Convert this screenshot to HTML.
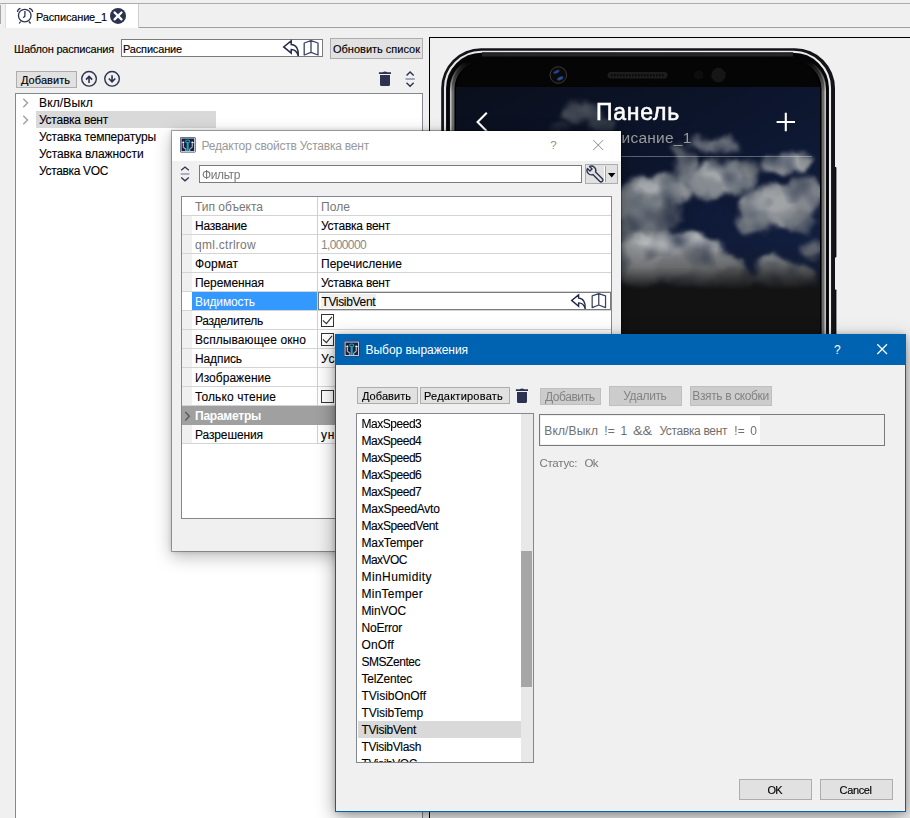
<!DOCTYPE html>
<html><head><meta charset="utf-8"><title>ui</title>
<style>
html,body{margin:0;padding:0;}
body{width:910px;height:818px;overflow:hidden;background:#f0f0f0;position:relative;font-family:"Liberation Sans",sans-serif;}
.t{position:absolute;white-space:pre;display:block;}
.r{position:absolute;}
svg{position:absolute;overflow:visible;}
</style></head><body>
<div class="r" style="left:0px;top:3px;width:910px;height:1px;background:#adadad;"></div>
<div class="r" style="left:138px;top:27px;width:772px;height:1px;background:#a0a0a0;"></div>
<div class="r" style="left:0px;top:5px;width:1px;height:18.5px;background:#a6a6a6;"></div>
<div class="r" style="left:5px;top:4px;width:1px;height:24px;background:#dcdcdc;"></div>
<div class="r" style="left:6px;top:4px;width:132px;height:24px;background:#fff;"></div>
<div class="r" style="left:138px;top:4px;width:1px;height:24px;background:#d0d0d0;"></div>
<svg style="left:16px;top:7px" width="18" height="18" viewBox="0 0 18 18"><circle cx="8.75" cy="8.6" r="6.3" fill="none" stroke="#2d3250" stroke-width="1.3"/><path d="M8.9 3.9V9.3L7.2 10.8" fill="none" stroke="#2d3250" stroke-width="1.3"/><path d="M1.5 5 Q1.6 2 4.5 1.3 M16.6 5 Q16.5 2 13 1.3 M4.6 14.5 L3.2 16.5 M13 14.5 L14.5 16.5" stroke="#2d3250" stroke-width="1.3" fill="none"/></svg>
<span class="t" style="left:36px;top:8.5px;font-size:11px;line-height:16px;color:#000;letter-spacing:-0.157px;-webkit-text-stroke:0.13px #000;">Расписание_1</span>
<svg style="left:110px;top:8px" width="16" height="16" viewBox="0 0 16 16"><circle cx="8" cy="7.9" r="8" fill="#2d3250"/><path d="M4.6 4.5L11.5 11.4M11.5 4.5L4.6 11.4" stroke="#fff" stroke-width="2.3" stroke-linecap="round"/></svg>
<span class="t" style="left:14px;top:40.5px;font-size:11px;line-height:16px;color:#000;letter-spacing:-0.202px;-webkit-text-stroke:0.13px #000;">Шаблон расписания</span>
<div class="r" style="left:121px;top:39px;width:202px;height:18px;background:#fff;border:1px solid #7a7a7a;box-sizing:border-box;"></div>
<span class="t" style="left:123px;top:40.5px;font-size:11px;line-height:16px;color:#000;letter-spacing:-0.165px;-webkit-text-stroke:0.13px #000;">Расписание</span>
<svg style="left:283px;top:40px" width="17.0" height="17.0" viewBox="0 0 17 17"><path d="M8.2 0.9 L0.7 6.9 L8.2 13.1 V9.6 C11.6 9.6 14 11.4 15.3 16 C15.9 9 13 4.4 8.2 4.4 Z" fill="none" stroke="#232b48" stroke-width="1.5" stroke-linejoin="miter"/></svg>
<svg style="left:303px;top:40px" width="17.0" height="17.0" viewBox="0 0 17 17"><path d="M1.2 3 L8 0.6 L15 3 V15 L8 12.4 L1.2 15 Z M8 0.6 V12.4" fill="none" stroke="#3b4362" stroke-width="1.3" stroke-linejoin="round"/></svg>
<div class="r" style="left:330px;top:38px;width:93px;height:21px;background:#e1e1e1;border:1px solid #adadad;box-sizing:border-box;"></div>
<span class="t" style="left:333px;top:40.5px;font-size:11px;line-height:16px;color:#000;letter-spacing:-0.001px;-webkit-text-stroke:0.13px #000;">Обновить список</span>
<div class="r" style="left:16px;top:71px;width:61px;height:17px;background:#e1e1e1;border:1px solid #adadad;box-sizing:border-box;"></div>
<span class="t" style="left:21px;top:71.5px;font-size:11px;line-height:16px;color:#000;letter-spacing:0.048px;-webkit-text-stroke:0.13px #000;">Добавить</span>
<svg style="left:81px;top:71px" width="17" height="17" viewBox="0 0 17 17"><circle cx="8.05" cy="7.85" r="7.3" fill="none" stroke="#2d3250" stroke-width="1.4"/><path d="M8.05 12V5.4M5 8.6L8.05 5.4L11.2 8.6" fill="none" stroke="#2d3250" stroke-width="1.6"/></svg>
<svg style="left:104px;top:71px" width="17" height="17" viewBox="0 0 17 17"><circle cx="8.05" cy="7.85" r="7.3" fill="none" stroke="#2d3250" stroke-width="1.4"/><path d="M8.05 4.2V10.6M4.8 7.5L8.05 10.8L11.3 7.5" fill="none" stroke="#2d3250" stroke-width="1.6"/></svg>
<svg style="left:378px;top:71px" width="14" height="16" viewBox="0 0 14 16"><path d="M0.9 1.2H13V2.9H0.9Z M4.6 1.3Q7 -0.2 9.4 1.3Z M2 4H12V13.4Q12 14.9 10.5 14.9H3.5Q2 14.9 2 13.4Z" fill="#2d3250"/></svg>
<svg style="left:405px;top:71px" width="10" height="16" viewBox="0 0 10 16"><path d="M1.5 4.6L5.1 1.1L8.7 4.6M1.5 11.8L5.1 15.2L8.7 11.8" fill="none" stroke="#2d3250" stroke-width="1.4"/><path d="M0.5 8H9.8" stroke="#a3a7ba" stroke-width="2"/></svg>
<div class="r" style="left:15px;top:93px;width:408px;height:740px;background:#fff;border:1px solid #828790;box-sizing:border-box;"></div>
<div class="r" style="left:36px;top:111px;width:180px;height:17px;background:#d9d9d9;"></div>
<span class="t" style="left:39px;top:94.75px;font-size:12px;line-height:16px;color:#000;letter-spacing:0.157px;-webkit-text-stroke:0.1px #000;">Вкл/Выкл</span>
<span class="t" style="left:39px;top:111.75px;font-size:12px;line-height:16px;color:#000;letter-spacing:-0.232px;-webkit-text-stroke:0.1px #000;">Уставка вент</span>
<span class="t" style="left:39px;top:128.75px;font-size:12px;line-height:16px;color:#000;letter-spacing:-0.163px;-webkit-text-stroke:0.1px #000;">Уставка температуры</span>
<span class="t" style="left:39px;top:145.75px;font-size:12px;line-height:16px;color:#000;letter-spacing:-0.091px;-webkit-text-stroke:0.1px #000;">Уставка влажности</span>
<span class="t" style="left:39px;top:162.75px;font-size:12px;line-height:16px;color:#000;letter-spacing:-0.341px;-webkit-text-stroke:0.1px #000;">Уставка VOC</span>
<svg style="left:22px;top:97.5px" width="8" height="10" viewBox="0 0 8 10"><path d="M1.3 0.8L5.5 5L1.3 9.2" fill="none" stroke="#a3a3a3" stroke-width="1.5"/></svg>
<svg style="left:22px;top:114.5px" width="8" height="10" viewBox="0 0 8 10"><path d="M1.3 0.8L5.5 5L1.3 9.2" fill="none" stroke="#a3a3a3" stroke-width="1.5"/></svg>
<div class="r" style="left:429px;top:37px;width:500px;height:800px;background:#f0f0f0;border:1px solid #000;box-sizing:border-box;"></div>
<svg style="left:0;top:0;overflow:hidden" width="910" height="806" viewBox="0 0 910 806"><defs><filter id="b1" x="-20%" y="-20%" width="140%" height="140%"><feGaussianBlur stdDeviation="0.6"/></filter><filter id="b2" x="-20%" y="-20%" width="140%" height="140%"><feGaussianBlur stdDeviation="1.4"/></filter><filter id="cl" x="-10%" y="-10%" width="120%" height="120%" color-interpolation-filters="sRGB"><feGaussianBlur in="SourceGraphic" stdDeviation="2.2" result="m"/><feTurbulence type="fractalNoise" baseFrequency="0.05" numOctaves="3" seed="4" result="n"/><feDisplacementMap in="m" in2="n" scale="13" xChannelSelector="R" yChannelSelector="G" result="md"/><feGaussianBlur in="md" stdDeviation="0.9" result="md2"/><feTurbulence type="fractalNoise" baseFrequency="0.035" numOctaves="2" seed="9" result="n2"/><feColorMatrix in="n2" type="matrix" values="0 0 0 0 1  0 0 0 0 1  0 0 0 0 1  1.5 0 0 0 0.15" result="na"/><feComposite in="md2" in2="na" operator="in"/></filter><filter id="cl2" x="-30%" y="-30%" width="160%" height="160%"><feGaussianBlur stdDeviation="5"/></filter><linearGradient id="sky" x1="0" y1="0" x2="1" y2="1"><stop offset="0" stop-color="#0a0f1c"/><stop offset="0.45" stop-color="#0c152c"/><stop offset="1" stop-color="#132144"/></linearGradient><linearGradient id="fade" x1="0" y1="0" x2="0" y2="1"><stop offset="0" stop-color="#131313" stop-opacity="0"/><stop offset="0.5" stop-color="#131313" stop-opacity="0.28"/><stop offset="0.8" stop-color="#131313" stop-opacity="0.72"/><stop offset="1" stop-color="#131313" stop-opacity="1"/></linearGradient><linearGradient id="hl" x1="0" y1="0" x2="1" y2="0"><stop offset="0" stop-color="#e6e6e6"/><stop offset="0.5" stop-color="#f4f4f4"/><stop offset="1" stop-color="#ececec"/></linearGradient><linearGradient id="lgL" x1="0" y1="0" x2="1" y2="0"><stop offset="0" stop-color="#0a0a0a"/><stop offset="0.12" stop-color="#6a6a6a"/><stop offset="0.24" stop-color="#b8b8b8"/><stop offset="0.55" stop-color="#747474"/><stop offset="0.9" stop-color="#151515"/><stop offset="1" stop-color="#000"/></linearGradient><linearGradient id="lgR" x1="0" y1="0" x2="1" y2="0"><stop offset="0" stop-color="#000"/><stop offset="0.12" stop-color="#151515"/><stop offset="0.5" stop-color="#7a7a7a"/><stop offset="0.76" stop-color="#c2c2c2"/><stop offset="0.9" stop-color="#5a5a5a"/><stop offset="1" stop-color="#0a0a0a"/></linearGradient><linearGradient id="vg" x1="0" y1="0" x2="0" y2="1"><stop offset="0" stop-color="#000"/><stop offset="1" stop-color="#fff"/></linearGradient><mask id="vm" maskUnits="userSpaceOnUse" x="440" y="40" width="400" height="800"><rect x="440" y="40" width="400" height="22" fill="#000"/><rect x="440" y="62" width="400" height="30" fill="url(#vg)"/><rect x="440" y="92" width="400" height="760" fill="#fff"/></mask><radialGradient id="hole"><stop offset="0" stop-color="#0f1b3a" stop-opacity="0.95"/><stop offset="0.55" stop-color="#0f1b3a" stop-opacity="0.8"/><stop offset="1" stop-color="#0f1b3a" stop-opacity="0"/></radialGradient><linearGradient id="tg" x1="0" y1="0" x2="0" y2="1"><stop offset="0" stop-color="#1b1b1b"/><stop offset="0.55" stop-color="#2a2a2a"/><stop offset="1" stop-color="#050506"/></linearGradient><clipPath id="scr"><rect x="456" y="87" width="364" height="740"/></clipPath><clipPath id="ph"><rect x="441" y="48" width="395" height="790" rx="40"/></clipPath></defs><rect x="834" y="167" width="2.4" height="90.5" rx="0.8" fill="#0b0b0d"/><rect x="834" y="289.5" width="2.4" height="60" rx="0.8" fill="#0b0b0d"/><rect x="441.2" y="48.2" width="393.8" height="800" rx="40" fill="#121418"/><g clip-path="url(#ph)"><rect x="445" y="51.7" width="385" height="800" rx="36.5" fill="none" stroke="url(#hl)" stroke-width="2.1" filter="url(#b1)"/><rect x="446.7" y="53.3" width="381.7" height="800" rx="35" fill="#050506"/><rect x="482" y="52.25" width="311" height="5.2" fill="url(#tg)"/><g mask="url(#vm)"><rect x="452.4" y="59" width="371.2" height="800" rx="30" fill="none" stroke="#6c6c6c" stroke-width="5" filter="url(#b1)"/><rect x="450.8" y="57.4" width="374.4" height="800" rx="31.5" fill="none" stroke="#c4c4c4" stroke-width="1.5" filter="url(#b1)"/><rect x="455.6" y="62" width="364.8" height="800" rx="27" fill="none" stroke="#050505" stroke-width="2.2" filter="url(#b1)"/></g></g><circle cx="558.3" cy="75" r="8.3" fill="#0a0a0a" stroke="#3a3a3a" stroke-width="1"/><ellipse cx="556.3" cy="71.8" rx="3.2" ry="1.4" fill="#2a4796" transform="rotate(-25 556.5 71.5)" filter="url(#b1)"/><ellipse cx="560.2" cy="78.2" rx="3.2" ry="1.5" fill="#2f4fa6" transform="rotate(-25 560.3 78.3)" filter="url(#b1)"/><rect x="607.5" y="72" width="60" height="6.4" rx="3.2" fill="#1d1d1d"/><path d="M611 75.2H665" stroke="#0a0a0a" stroke-width="2.4" stroke-dasharray="1.6 1.4"/><circle cx="698.7" cy="75" r="4.6" fill="#111" filter="url(#b1)"/><circle cx="718.5" cy="75" r="7.4" fill="#121212" filter="url(#b1)"/><g clip-path="url(#scr)"><rect x="456" y="87" width="364" height="740" fill="#131313"/><rect x="456" y="87" width="364" height="204" fill="url(#sky)"/><g filter="url(#cl)"><ellipse cx="580" cy="112" rx="20" ry="10" fill="#59606a" opacity="0.75"/><ellipse cx="600" cy="124" rx="14" ry="8" fill="#4c535d" opacity="0.6"/><ellipse cx="562" cy="127" rx="10" ry="5" fill="#3a414b" opacity="0.5"/><ellipse cx="655" cy="192" rx="34" ry="17" fill="#8a8f94" opacity="1"/><ellipse cx="636" cy="200" rx="22" ry="20" fill="#7b8086" opacity="1"/><ellipse cx="645" cy="224" rx="26" ry="13" fill="#686e75" opacity="0.95"/><ellipse cx="625" cy="232" rx="10" ry="10" fill="#5c626a" opacity="0.9"/><ellipse cx="640" cy="214" rx="22" ry="14" fill="#6f757c" opacity="0.95"/><ellipse cx="668" cy="214" rx="14" ry="12" fill="#676d75" opacity="0.85"/><ellipse cx="686" cy="167" rx="11" ry="17" fill="#7a7f86" opacity="0.9"/><ellipse cx="682" cy="150" rx="8" ry="6" fill="#6a7078" opacity="0.8"/><ellipse cx="717" cy="146" rx="22" ry="7" fill="#80858c" opacity="0.9"/><ellipse cx="700" cy="143" rx="10" ry="5" fill="#6c727a" opacity="0.8"/><ellipse cx="724" cy="178" rx="32" ry="18" fill="#8f9498" opacity="1"/><ellipse cx="706" cy="186" rx="18" ry="13" fill="#858a8f" opacity="0.95"/><ellipse cx="748" cy="170" rx="12" ry="10" fill="#6f757c" opacity="0.8"/><ellipse cx="785" cy="164" rx="24" ry="9" fill="#9da0a3" opacity="1"/><ellipse cx="803" cy="160" rx="8" ry="5" fill="#8a8e93" opacity="0.8"/><ellipse cx="776" cy="206" rx="38" ry="20" fill="#8e9297" opacity="1"/><ellipse cx="805" cy="196" rx="16" ry="20" fill="#83878d" opacity="0.95"/><ellipse cx="752" cy="222" rx="18" ry="12" fill="#7a7f85" opacity="0.9"/><ellipse cx="800" cy="222" rx="18" ry="10" fill="#6e737a" opacity="0.8"/><ellipse cx="812" cy="249" rx="10" ry="10" fill="#72777e" opacity="0.85"/><ellipse cx="672" cy="248" rx="50" ry="17" fill="#a6a9ab" opacity="1"/><ellipse cx="640" cy="262" rx="34" ry="24" fill="#979a9d" opacity="1"/><ellipse cx="700" cy="270" rx="46" ry="20" fill="#8a8d90" opacity="1"/><ellipse cx="736" cy="280" rx="20" ry="14" fill="#6f7276" opacity="1"/><ellipse cx="772" cy="264" rx="16" ry="10" fill="#888c90" opacity="1"/><ellipse cx="786" cy="278" rx="30" ry="14" fill="#74787c" opacity="1"/><ellipse cx="650" cy="188" rx="20" ry="8" fill="#a9adb0" opacity="0.9"/><ellipse cx="722" cy="174" rx="20" ry="8" fill="#a5a9ac" opacity="0.9"/><ellipse cx="772" cy="202" rx="22" ry="9" fill="#a2a6a9" opacity="0.9"/><ellipse cx="672" cy="242" rx="34" ry="8" fill="#b5b8b9" opacity="0.95"/><ellipse cx="786" cy="162" rx="14" ry="4" fill="#aaadaf" opacity="0.9"/><ellipse cx="770" cy="260" rx="9" ry="5" fill="#9b9ea1" opacity="0.9"/></g><ellipse cx="714" cy="216" rx="30" ry="17" fill="url(#hole)"/><rect x="456" y="244" width="364" height="46" fill="url(#fade)"/><rect x="456" y="290" width="364" height="540" fill="#131313"/></g><rect x="465" y="156" width="347" height="1" fill="#ffffff" opacity="0.32"/><path d="M486.8 112.7L477.6 122L486.8 131.3" fill="none" stroke="#fff" stroke-width="2.1"/><path d="M785.8 112.8V131.2M776.6 122H795" stroke="#fff" stroke-width="2.1"/></svg>
<span class="t" style="left:596px;top:97.0px;font-size:23px;line-height:30px;color:#fff;letter-spacing:0.757px;-webkit-text-stroke:0.55px #fff;">Панель</span>
<span class="t" style="left:586px;top:128.0px;font-size:15.5px;line-height:20px;color:#9b9b9b;letter-spacing:0.234px;">Расписание_1</span>
<div class="r" style="left:171px;top:130px;width:451px;height:422px;background:#f0f0f0;background-clip:padding-box;box-sizing:border-box;border:1px solid rgba(0,0,0,0.31);box-shadow:0 5px 16px rgba(0,0,0,0.26), 0 0 5px rgba(0,0,0,0.14);"></div>
<div class="r" style="left:172px;top:131px;width:449px;height:30px;background:#fff;"></div>
<svg style="left:180.1px;top:137.0px" width="15.6" height="15.6" viewBox="0 0 15.4 15.4"><rect x="0" y="0" width="15.4" height="15.4" rx="1.3" fill="#2a3050"/><rect x="1.05" y="1.05" width="13.3" height="13.3" fill="#1a2040" stroke="#c6cad6" stroke-width="1"/><path d="M3.3 6.6V9.5Q3.3 11.1 5 11.2Q5.8 11.3 5.8 12.2V13.8M12.1 6.6V9.5Q12.1 11.1 10.4 11.2Q9.6 11.3 9.6 12.2V13.8" fill="none" stroke="#f2f4f7" stroke-width="0.85"/><path d="M1.6 5.6H2.6M12.8 5.6H13.8" stroke="#e4e7ec" stroke-width="0.8"/><circle cx="3.3" cy="5.4" r="0.95" fill="#f2f4f7"/><circle cx="12.1" cy="5.4" r="0.95" fill="#f2f4f7"/><path d="M7.6 5V13.9" stroke="#1fa7bd" stroke-width="2"/><ellipse cx="7.6" cy="4.2" rx="2.05" ry="1.35" fill="#1a2040" stroke="#1fa7bd" stroke-width="1"/></svg>
<span class="t" style="left:201.5px;top:137.5px;font-size:12px;line-height:16px;color:#999;letter-spacing:-0.210px;">Редактор свойств Уставка вент</span>
<span class="t" style="left:550.3px;top:137.3px;font-size:11.5px;line-height:16px;color:#8c8c8c;">?</span>
<svg style="left:593px;top:140px" width="11" height="11" viewBox="0 0 11 11"><path d="M0.3 0.1L10.2 10M10.2 0.1L0.3 10" stroke="#8c8c8c" stroke-width="1"/></svg>
<svg style="left:180px;top:166px" width="10" height="16" viewBox="0 0 10 16"><path d="M1.2 4.3L5 1L8.8 4.3M1.2 11.6L5 14.8L8.8 11.6" fill="none" stroke="#2d3250" stroke-width="1.3"/><path d="M0.6 8H9.4" stroke="#a3a7ba" stroke-width="1.8"/></svg>
<div class="r" style="left:199px;top:165px;width:383px;height:18px;background:#fff;border:1px solid #7a7a7a;box-sizing:border-box;"></div>
<span class="t" style="left:202px;top:166.5px;font-size:12px;line-height:16px;color:#777;letter-spacing:-0.385px;">Фильтр</span>
<div class="r" style="left:585px;top:164px;width:33px;height:20px;background:#e1e1e1;border:1px solid #adadad;box-sizing:border-box;"></div>
<div class="r" style="left:604px;top:166px;width:1px;height:16px;background:#fdfdfd;"></div>
<div class="r" style="left:605px;top:166px;width:1px;height:16px;background:#a0a0a0;"></div>
<svg style="left:0;top:0" width="910" height="200" viewBox="0 0 910 200"><g transform="translate(591.4 170.4) rotate(-45)"><path d="M-1.5 -4.1 V-0.6 H1.5 V-4.1 A4.4 4.4 0 0 1 1.9 4 V13.6 A1.9 1.9 0 0 1 -1.9 13.6 V4 A4.4 4.4 0 0 1 -1.5 -4.1 Z" fill="none" stroke="#2d3250" stroke-width="1.4" stroke-linejoin="round"/></g></svg>
<svg style="left:608px;top:173px" width="8" height="5" viewBox="0 0 8 5"><path d="M0 0H7.4L3.7 4.4Z" fill="#000"/></svg>
<div class="r" style="left:181px;top:196px;width:431px;height:323px;background:#fff;border:1px solid #828790;box-sizing:border-box;"></div>
<div class="r" style="left:182px;top:215px;width:429px;height:1px;background:#d4d4d4;"></div>
<span class="t" style="left:195px;top:198.5px;font-size:12px;line-height:16px;color:#777;letter-spacing:-0.007px;">Тип объекта</span>
<span class="t" style="left:321px;top:198.5px;font-size:12px;line-height:16px;color:#777;letter-spacing:0.072px;">Поле</span>
<div class="r" style="left:182px;top:216px;width:10px;height:19px;background:#f0f0f0;"></div>
<div class="r" style="left:182px;top:234px;width:429px;height:1px;background:#d4d4d4;"></div>
<span class="t" style="left:195px;top:217.75px;font-size:12px;line-height:16px;color:#000;letter-spacing:-0.203px;-webkit-text-stroke:0.1px #000;">Название</span>
<span class="t" style="left:321px;top:217.75px;font-size:12px;line-height:16px;color:#000;letter-spacing:-0.232px;-webkit-text-stroke:0.1px #000;">Уставка вент</span>
<div class="r" style="left:182px;top:235px;width:10px;height:19px;background:#f0f0f0;"></div>
<div class="r" style="left:182px;top:253px;width:429px;height:1px;background:#d4d4d4;"></div>
<span class="t" style="left:195px;top:236.5px;font-size:12px;line-height:16px;color:#777;letter-spacing:0.273px;">qml.ctrlrow</span>
<span class="t" style="left:321px;top:236.5px;font-size:12px;line-height:16px;color:#888;letter-spacing:-0.631px;">1,000000</span>
<div class="r" style="left:182px;top:254px;width:10px;height:19px;background:#f0f0f0;"></div>
<div class="r" style="left:182px;top:272px;width:429px;height:1px;background:#d4d4d4;"></div>
<span class="t" style="left:195px;top:255.75px;font-size:12px;line-height:16px;color:#000;letter-spacing:0.062px;-webkit-text-stroke:0.1px #000;">Формат</span>
<span class="t" style="left:321px;top:255.75px;font-size:12px;line-height:16px;color:#000;letter-spacing:0.010px;-webkit-text-stroke:0.1px #000;">Перечисление</span>
<div class="r" style="left:182px;top:273px;width:10px;height:19px;background:#f0f0f0;"></div>
<div class="r" style="left:182px;top:291px;width:429px;height:1px;background:#d4d4d4;"></div>
<span class="t" style="left:195px;top:274.75px;font-size:12px;line-height:16px;color:#000;letter-spacing:-0.100px;-webkit-text-stroke:0.1px #000;">Переменная</span>
<span class="t" style="left:321px;top:274.75px;font-size:12px;line-height:16px;color:#000;letter-spacing:-0.232px;-webkit-text-stroke:0.1px #000;">Уставка вент</span>
<div class="r" style="left:192px;top:292px;width:125px;height:19px;background:#3399ff;"></div>
<div class="r" style="left:182px;top:310px;width:429px;height:1px;background:#d4d4d4;"></div>
<span class="t" style="left:195px;top:293.5px;font-size:12px;line-height:16px;color:#fff;letter-spacing:-0.120px;">Видимость</span>
<span class="t" style="left:321px;top:293.75px;font-size:12px;line-height:16px;color:#000;letter-spacing:-0.215px;-webkit-text-stroke:0.1px #000;">TVisibVent</span>
<div class="r" style="left:182px;top:311px;width:10px;height:19px;background:#f0f0f0;"></div>
<div class="r" style="left:182px;top:329px;width:429px;height:1px;background:#d4d4d4;"></div>
<span class="t" style="left:195px;top:312.75px;font-size:12px;line-height:16px;color:#000;letter-spacing:-0.296px;-webkit-text-stroke:0.1px #000;">Разделитель</span>
<div class="r" style="left:182px;top:330px;width:10px;height:19px;background:#f0f0f0;"></div>
<div class="r" style="left:182px;top:348px;width:429px;height:1px;background:#d4d4d4;"></div>
<span class="t" style="left:195px;top:331.75px;font-size:12px;line-height:16px;color:#000;letter-spacing:0.082px;-webkit-text-stroke:0.1px #000;">Всплывающее окно</span>
<div class="r" style="left:182px;top:349px;width:10px;height:19px;background:#f0f0f0;"></div>
<div class="r" style="left:182px;top:367px;width:429px;height:1px;background:#d4d4d4;"></div>
<span class="t" style="left:195px;top:350.75px;font-size:12px;line-height:16px;color:#000;letter-spacing:-0.114px;-webkit-text-stroke:0.1px #000;">Надпись</span>
<span class="t" style="left:321px;top:350.75px;font-size:12px;line-height:16px;color:#000;letter-spacing:0.590px;-webkit-text-stroke:0.1px #000;">Ус</span>
<div class="r" style="left:182px;top:368px;width:10px;height:19px;background:#f0f0f0;"></div>
<div class="r" style="left:182px;top:386px;width:429px;height:1px;background:#d4d4d4;"></div>
<span class="t" style="left:195px;top:369.75px;font-size:12px;line-height:16px;color:#000;letter-spacing:0.037px;-webkit-text-stroke:0.1px #000;">Изображение</span>
<div class="r" style="left:182px;top:387px;width:10px;height:19px;background:#f0f0f0;"></div>
<div class="r" style="left:182px;top:405px;width:429px;height:1px;background:#d4d4d4;"></div>
<span class="t" style="left:195px;top:388.75px;font-size:12px;line-height:16px;color:#000;letter-spacing:0.097px;-webkit-text-stroke:0.1px #000;">Только чтение</span>
<div class="r" style="left:182px;top:406px;width:429px;height:19px;background:#a0a0a0;"></div>
<div class="r" style="left:182px;top:424px;width:429px;height:1px;background:#a0a0a0;"></div>
<span class="t" style="left:195px;top:407.5px;font-size:12px;line-height:16px;color:#fff;letter-spacing:-0.239px;font-weight:bold;">Параметры</span>
<div class="r" style="left:182px;top:425px;width:10px;height:19px;background:#f0f0f0;"></div>
<div class="r" style="left:182px;top:443px;width:429px;height:1px;background:#d4d4d4;"></div>
<span class="t" style="left:195px;top:426.75px;font-size:12px;line-height:16px;color:#000;letter-spacing:-0.112px;-webkit-text-stroke:0.1px #000;">Разрешения</span>
<span class="t" style="left:321px;top:426.75px;font-size:12px;line-height:16px;color:#000;letter-spacing:0.686px;-webkit-text-stroke:0.1px #000;">ун</span>
<div class="r" style="left:317px;top:197px;width:1px;height:247px;background:#d0d0d0;"></div>
<div class="r" style="left:317px;top:406px;width:1px;height:19px;background:#a0a0a0;"></div>
<svg style="left:184px;top:410.6px" width="7" height="11" viewBox="0 0 7 11"><path d="M1.3 1L5.3 5.3L1.3 9.6" fill="none" stroke="#5c5c5c" stroke-width="1.5"/></svg>
<div class="r" style="left:318px;top:292px;width:293px;height:18px;background:#fff;border:1px solid #7a7a7a;box-sizing:border-box;"></div>
<div class="r" style="left:321px;top:294px;width:55px;height:14px;background:#f0f0f0;"></div>
<span class="t" style="left:321.4px;top:293.75px;font-size:12px;line-height:16px;color:#000;letter-spacing:-0.325px;-webkit-text-stroke:0.1px #000;">TVisibVent</span>
<svg style="left:571.3px;top:293.6px" width="15.81" height="15.81" viewBox="0 0 17 17"><path d="M8.2 0.9 L0.7 6.9 L8.2 13.1 V9.6 C11.6 9.6 14 11.4 15.3 16 C15.9 9 13 4.4 8.2 4.4 Z" fill="none" stroke="#232b48" stroke-width="1.5" stroke-linejoin="miter"/></svg>
<svg style="left:590.6px;top:293px" width="16.49" height="16.49" viewBox="0 0 17 17"><path d="M1.2 3 L8 0.6 L15 3 V15 L8 12.4 L1.2 15 Z M8 0.6 V12.4" fill="none" stroke="#3b4362" stroke-width="1.3" stroke-linejoin="round"/></svg>
<div class="r" style="left:321px;top:314px;width:13px;height:13px;background:#fff;border:1px solid #333;box-sizing:border-box;"></div>
<svg style="left:321px;top:314px" width="13" height="13" viewBox="0 0 13 13"><path d="M1.9 6.3L5.4 9.7L11 2.9" fill="none" stroke="#333" stroke-width="1.15"/></svg>
<div class="r" style="left:321px;top:333px;width:13px;height:13px;background:#fff;border:1px solid #333;box-sizing:border-box;"></div>
<svg style="left:321px;top:333px" width="13" height="13" viewBox="0 0 13 13"><path d="M1.9 6.3L5.4 9.7L11 2.9" fill="none" stroke="#333" stroke-width="1.15"/></svg>
<div class="r" style="left:321px;top:390px;width:13px;height:13px;background:#fff;border:1px solid #333;box-sizing:border-box;"></div>
<div class="r" style="left:335px;top:334px;width:571px;height:478px;background:#f0f0f0;border:1px solid #0063b1;box-sizing:border-box;box-shadow:0 6px 18px rgba(0,0,0,0.38), 0 0 6px rgba(0,0,0,0.2);"></div>
<div class="r" style="left:335px;top:334px;width:571px;height:30.5px;background:#0063b1;"></div>
<svg style="left:344.4px;top:341.2px" width="15.6" height="15.6" viewBox="0 0 15.4 15.4"><rect x="0" y="0" width="15.4" height="15.4" rx="1.3" fill="#2a3050"/><rect x="1.05" y="1.05" width="13.3" height="13.3" fill="#1a2040" stroke="#c6cad6" stroke-width="1"/><path d="M3.3 6.6V9.5Q3.3 11.1 5 11.2Q5.8 11.3 5.8 12.2V13.8M12.1 6.6V9.5Q12.1 11.1 10.4 11.2Q9.6 11.3 9.6 12.2V13.8" fill="none" stroke="#f2f4f7" stroke-width="0.85"/><path d="M1.6 5.6H2.6M12.8 5.6H13.8" stroke="#e4e7ec" stroke-width="0.8"/><circle cx="3.3" cy="5.4" r="0.95" fill="#f2f4f7"/><circle cx="12.1" cy="5.4" r="0.95" fill="#f2f4f7"/><path d="M7.6 5V13.9" stroke="#1fa7bd" stroke-width="2"/><ellipse cx="7.6" cy="4.2" rx="2.05" ry="1.35" fill="#1a2040" stroke="#1fa7bd" stroke-width="1"/></svg>
<span class="t" style="left:365.5px;top:341.5px;font-size:12px;line-height:16px;color:#fff;letter-spacing:-0.037px;">Выбор выражения</span>
<span class="t" style="left:834px;top:341.5px;font-size:12px;line-height:16px;color:#fff;">?</span>
<svg style="left:877px;top:344px" width="11" height="11" viewBox="0 0 11 11"><path d="M0.3 0.3L10 10M10 0.3L0.3 10" stroke="#fff" stroke-width="1.3"/></svg>
<div class="r" style="left:357px;top:387px;width:61px;height:17px;background:#e1e1e1;border:1px solid #adadad;box-sizing:border-box;"></div>
<span class="t" style="left:362px;top:387.5px;font-size:11px;line-height:16px;color:#000;letter-spacing:0.048px;-webkit-text-stroke:0.13px #000;">Добавить</span>
<div class="r" style="left:420px;top:387px;width:90px;height:17px;background:#e1e1e1;border:1px solid #adadad;box-sizing:border-box;"></div>
<span class="t" style="left:424px;top:387.5px;font-size:11px;line-height:16px;color:#000;letter-spacing:0.232px;-webkit-text-stroke:0.13px #000;">Редактировать</span>
<svg style="left:515px;top:388.3px" width="14" height="16" viewBox="0 0 14 16"><path d="M0.9 1.2H13V2.9H0.9Z M4.6 1.3Q7 -0.2 9.4 1.3Z M2 4H12V13.4Q12 14.9 10.5 14.9H3.5Q2 14.9 2 13.4Z" fill="#2d3250"/></svg>
<div class="r" style="left:540px;top:388px;width:61px;height:17px;background:#cccccc;border:1px solid #bfbfbf;box-sizing:border-box;"></div>
<span class="t" style="left:545px;top:388.9px;font-size:12px;line-height:16px;color:#838383;letter-spacing:-0.442px;">Добавить</span>
<div class="r" style="left:609px;top:386px;width:73px;height:20px;background:#cccccc;border:1px solid #bfbfbf;box-sizing:border-box;"></div>
<span class="t" style="left:623.3px;top:388.4px;font-size:12px;line-height:16px;color:#838383;letter-spacing:-0.374px;">Удалить</span>
<div class="r" style="left:690px;top:386px;width:82px;height:20px;background:#cccccc;border:1px solid #bfbfbf;box-sizing:border-box;"></div>
<span class="t" style="left:692.3px;top:388.4px;font-size:12px;line-height:16px;color:#838383;letter-spacing:-0.370px;">Взять в скобки</span>
<div class="r" style="left:356px;top:413px;width:178px;height:350px;background:#fff;border:1px solid #828790;box-sizing:border-box;"></div>
<div class="r" style="left:521px;top:414px;width:12px;height:348px;background:#e8e8e8;"></div>
<div class="r" style="left:521px;top:551px;width:11px;height:136px;background:#a6a6a6;"></div>
<div class="r" style="left:357px;top:414px;width:164px;height:348px;overflow:hidden;">
<span class="t" style="left:4.5px;top:1.75px;font-size:12px;line-height:16px;color:#000;letter-spacing:-0.471px;-webkit-text-stroke:0.1px #000;">MaxSpeed3</span>
<span class="t" style="left:4.5px;top:18.75px;font-size:12px;line-height:16px;color:#000;letter-spacing:-0.471px;-webkit-text-stroke:0.1px #000;">MaxSpeed4</span>
<span class="t" style="left:4.5px;top:35.75px;font-size:12px;line-height:16px;color:#000;letter-spacing:-0.471px;-webkit-text-stroke:0.1px #000;">MaxSpeed5</span>
<span class="t" style="left:4.5px;top:52.75px;font-size:12px;line-height:16px;color:#000;letter-spacing:-0.471px;-webkit-text-stroke:0.1px #000;">MaxSpeed6</span>
<span class="t" style="left:4.5px;top:69.75px;font-size:12px;line-height:16px;color:#000;letter-spacing:-0.471px;-webkit-text-stroke:0.1px #000;">MaxSpeed7</span>
<span class="t" style="left:4.5px;top:86.75px;font-size:12px;line-height:16px;color:#000;letter-spacing:-0.255px;-webkit-text-stroke:0.1px #000;">MaxSpeedAvto</span>
<span class="t" style="left:4.5px;top:103.75px;font-size:12px;line-height:16px;color:#000;letter-spacing:-0.408px;-webkit-text-stroke:0.1px #000;">MaxSpeedVent</span>
<span class="t" style="left:4.5px;top:120.75px;font-size:12px;line-height:16px;color:#000;letter-spacing:-0.132px;-webkit-text-stroke:0.1px #000;">MaxTemper</span>
<span class="t" style="left:4.5px;top:137.75px;font-size:12px;line-height:16px;color:#000;letter-spacing:-0.529px;-webkit-text-stroke:0.1px #000;">MaxVOC</span>
<span class="t" style="left:4.5px;top:154.75px;font-size:12px;line-height:16px;color:#000;letter-spacing:0.408px;-webkit-text-stroke:0.1px #000;">MinHumidity</span>
<span class="t" style="left:4.5px;top:171.75px;font-size:12px;line-height:16px;color:#000;letter-spacing:0.239px;-webkit-text-stroke:0.1px #000;">MinTemper</span>
<span class="t" style="left:4.5px;top:188.75px;font-size:12px;line-height:16px;color:#000;letter-spacing:-0.140px;-webkit-text-stroke:0.1px #000;">MinVOC</span>
<span class="t" style="left:4.5px;top:205.75px;font-size:12px;line-height:16px;color:#000;letter-spacing:-0.215px;-webkit-text-stroke:0.1px #000;">NoError</span>
<span class="t" style="left:4.5px;top:222.75px;font-size:12px;line-height:16px;color:#000;letter-spacing:0.141px;-webkit-text-stroke:0.1px #000;">OnOff</span>
<span class="t" style="left:4.5px;top:239.75px;font-size:12px;line-height:16px;color:#000;letter-spacing:-0.466px;-webkit-text-stroke:0.1px #000;">SMSZentec</span>
<span class="t" style="left:4.5px;top:256.75px;font-size:12px;line-height:16px;color:#000;letter-spacing:-0.170px;-webkit-text-stroke:0.1px #000;">TelZentec</span>
<span class="t" style="left:4.5px;top:273.75px;font-size:12px;line-height:16px;color:#000;letter-spacing:-0.038px;-webkit-text-stroke:0.1px #000;">TVisibOnOff</span>
<span class="t" style="left:4.5px;top:290.75px;font-size:12px;line-height:16px;color:#000;letter-spacing:-0.097px;-webkit-text-stroke:0.1px #000;">TVisibTemp</span>
<div class="r" style="left:1px;top:307.0px;width:163px;height:17px;background:#d9d9d9;"></div>
<span class="t" style="left:4.5px;top:307.75px;font-size:12px;line-height:16px;color:#000;letter-spacing:-0.265px;-webkit-text-stroke:0.1px #000;">TVisibVent</span>
<span class="t" style="left:4.5px;top:324.75px;font-size:12px;line-height:16px;color:#000;letter-spacing:-0.331px;-webkit-text-stroke:0.1px #000;">TVisibVlash</span>
<span class="t" style="left:4.5px;top:341.75px;font-size:12px;line-height:16px;color:#000;letter-spacing:-0.403px;-webkit-text-stroke:0.1px #000;">TVisibVOC</span>
</div>
<div class="r" style="left:539px;top:414px;width:346px;height:32px;background:#f0f0f0;border:1px solid #7a7a7a;box-sizing:border-box;"></div>
<div class="r" style="left:541px;top:416px;width:219px;height:28px;background:#fff;"></div>
<span class="t" style="left:544.3px;top:422.5px;font-size:12px;line-height:16px;color:#707070;letter-spacing:0.120px;">Вкл/Выкл</span>
<span class="t" style="left:604.3px;top:422.5px;font-size:12px;line-height:16px;color:#707070;">!=</span>
<span class="t" style="left:620.6px;top:422.5px;font-size:12px;line-height:16px;color:#707070;">1</span>
<span class="t" style="left:633.2px;top:422.5px;font-size:12px;line-height:16px;color:#707070;transform:scaleX(1.2);transform-origin:0 0;">&amp;&amp;</span>
<span class="t" style="left:659.4px;top:422.5px;font-size:12px;line-height:16px;color:#707070;letter-spacing:-0.341px;">Уставка вент</span>
<span class="t" style="left:734.3px;top:422.5px;font-size:12px;line-height:16px;color:#707070;">!=</span>
<span class="t" style="left:750.2px;top:422.5px;font-size:12px;line-height:16px;color:#707070;">0</span>
<span class="t" style="left:539.4px;top:454.5px;font-size:11.5px;line-height:16px;color:#777;letter-spacing:-0.235px;">Статус:</span>
<span class="t" style="left:584.5px;top:454.5px;font-size:11.5px;line-height:16px;color:#777;letter-spacing:-0.748px;">Ok</span>
<div class="r" style="left:739px;top:779px;width:73px;height:21px;background:#e1e1e1;border:1px solid #adadad;box-sizing:border-box;"></div>
<span class="t" style="left:767.6px;top:781.6px;font-size:11px;line-height:16px;color:#000;letter-spacing:-0.847px;-webkit-text-stroke:0.13px #000;">OK</span>
<div class="r" style="left:820px;top:779px;width:73px;height:21px;background:#e1e1e1;border:1px solid #adadad;box-sizing:border-box;"></div>
<span class="t" style="left:839.6px;top:781.6px;font-size:11px;line-height:16px;color:#000;letter-spacing:-0.373px;-webkit-text-stroke:0.13px #000;">Cancel</span>
</body></html>
